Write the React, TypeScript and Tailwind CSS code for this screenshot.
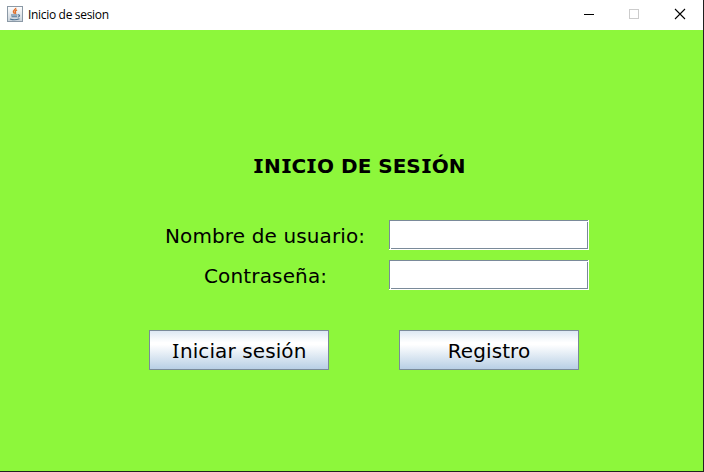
import React from "react";

function JavaIcon() {
  return (
    <svg width="16" height="16" viewBox="0 0 16 16" className="shrink-0">
      <defs>
        <linearGradient id="tile" x1="0" y1="0" x2="0" y2="1">
          <stop offset="0" stopColor="#ffffff" />
          <stop offset="1" stopColor="#c9d2da" />
        </linearGradient>
      </defs>
      <rect x="0.5" y="0.5" width="15" height="15" fill="url(#tile)" stroke="#8b99a6" />
      <path d="M8.6 1.8c1 1.5-2.8 2.300-2.200 4 .2.700.9 1.100 1.200 2M10 3.800C8.600 4.600 7.800 5.300 8.500 6.500c.3.500.1.900-.2 1.300" fill="none" stroke="#e0702a" strokeWidth="1.400" />
      <path d="M4 9h6.500M4.500 10.700h5.500M11 9c2-.6 2.400 1.500-.3 2.300M3 13c2.500.9 7 .8 9.500-.2" fill="none" stroke="#4d7393" strokeWidth="1.100" />
    </svg>
  );
}

function BoldI() {
  return <span className="inline-block w-[10.9px] scale-x-[1.25] text-center font-['Noto_Sans',sans-serif] text-[20.4px] leading-none">I</span>;
}

function TextField({ label }: { label: string }) {
  return (
    <div className="relative h-[30px] w-[200px] bg-white">
      <input aria-label={label} className="block h-[29px] w-[199px] border border-[#7a8a99] bg-white px-1 text-[20px] outline-none" />
      <span className="absolute right-px top-px h-px w-px bg-white" />
      <span className="absolute bottom-px left-px h-px w-px bg-white" />
    </div>
  );
}

function Button({ children }: { children: React.ReactNode }) {
  return (
    <button className="flex h-10 w-[180px] items-center justify-center whitespace-pre border border-[#7a8a99] bg-[linear-gradient(180deg,#dde8f3_0%,#ffffff_30%,#ffffff_36%,#b8cfe5_100%)] pt-0.5 text-[20px] leading-[24px] tracking-[0.1px]">
      {children}
    </button>
  );
}

export default function App() {
  return (
    <div className="flex h-[472px] w-[704px] flex-col overflow-hidden border-b border-r border-[#202020] bg-[#8df73b] font-['DejaVu_Sans',sans-serif] text-black">
      <header className="flex h-[30px] shrink-0 bg-white">
        <div className="flex flex-1 items-start gap-[5px] pl-[7px] pt-[6px]">
          <JavaIcon />
          <span className="pt-px font-['Open_Sans',sans-serif] text-[12px] leading-[16px] tracking-[-0.32px]">Inicio de sesion</span>
        </div>
        <svg width="138" height="30" viewBox="565 0 138 30" fill="none" shapeRendering="crispEdges">
          <path d="M584 14.500h10" stroke="#000" />
          <rect x="629.500" y="9.500" width="9" height="9" stroke="#ccc" />
          <path d="M675 9l10 10M685 9l-10 10" stroke="#000" shapeRendering="auto" strokeWidth="1.100" />
        </svg>
      </header>
      <main className="pt-[121px]">
        <h1 className="ml-[253px] h-[30px] whitespace-nowrap text-[20px] font-bold leading-[30px]">
          <BoldI />N<BoldI />C<BoldI />O DE SES<BoldI />ÓN
        </h1>
        <div className="mt-[39px] flex items-center">
          <label className="ml-[165px] w-[224px] whitespace-nowrap pt-[2px] text-[20px] leading-[28px] tracking-[0.12px]">Nombre de usuario:</label>
          <TextField label="Nombre de usuario" />
        </div>
        <div className="mt-[10px] flex items-center">
          <label className="ml-[204px] w-[185px] whitespace-nowrap pt-[2px] text-[20px] leading-[28px] tracking-[0.15px]">Contraseña:</label>
          <TextField label="Contraseña" />
        </div>
        <div className="ml-[149px] mt-10 flex gap-[70px]">
          <Button><span><span className="inline-block w-[8.4px] text-center font-['Noto_Sans',sans-serif] text-[20.4px] leading-none">I</span>niciar sesión</span></Button>
          <Button>Registro</Button>
        </div>
      </main>
    </div>
  );
}
